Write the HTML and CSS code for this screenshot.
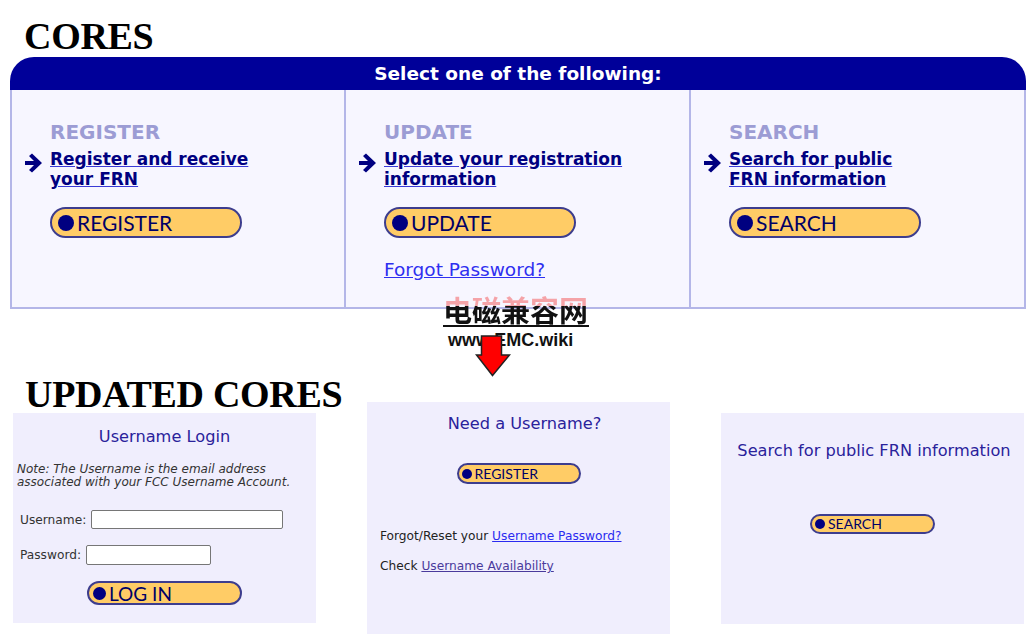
FILE: index.html
```html
<!DOCTYPE html>
<html lang="en">
<head>
  <meta charset="UTF-8">
  <title>CORES - Updated CORES</title>
  <link rel="stylesheet" href="styles.css">
</head>
<body>

  <h1 class="page-title">CORES</h1>

  <div class="panel">
    <div class="panel-header">Select one of the following:</div>
    <div class="panel-body">
      <div class="column">
        <h3>REGISTER</h3>
        <div class="link-row">
          <svg class="arrow" width="17" height="20" viewBox="0 0 17 20"><polygon points="0,8 9,8 4,3 7,0.5 17,10 7,19.5 4,17 9,12 0,12"/></svg>
          <a href="#">Register and receive<br>your FRN</a>
        </div>
        <a class="pill pill-big" href="#"><span class="dot"></span>REGISTER</a>
      </div>
      <div class="column">
        <h3>UPDATE</h3>
        <div class="link-row">
          <svg class="arrow" width="17" height="20" viewBox="0 0 17 20"><polygon points="0,8 9,8 4,3 7,0.5 17,10 7,19.5 4,17 9,12 0,12"/></svg>
          <a href="#">Update your registration<br>information</a>
        </div>
        <a class="pill pill-big" href="#"><span class="dot"></span>UPDATE</a>
        <a class="forgot" href="#">Forgot Password?</a>
      </div>
      <div class="column">
        <h3>SEARCH</h3>
        <div class="link-row">
          <svg class="arrow" width="17" height="20" viewBox="0 0 17 20"><polygon points="0,8 9,8 4,3 7,0.5 17,10 7,19.5 4,17 9,12 0,12"/></svg>
          <a href="#">Search for public<br>FRN information</a>
        </div>
        <a class="pill pill-big" href="#"><span class="dot"></span>SEARCH</a>
      </div>
    </div>
  </div>

  <div class="bottom">
    <div class="bottom-left">
      <h1 class="page-title page-title-small">UPDATED CORES</h1>
      <div class="box box-login">
        <div class="box-title">Username Login</div>
        <p class="note">Note: The Username is the email address<br>associated with your FCC Username Account.</p>
        <div class="form-row">
          <label for="username">Username:</label>
          <input type="text" id="username" class="input-user">
        </div>
        <div class="form-row form-row-second">
          <label for="password">Password:</label>
          <input type="password" id="password" class="input-pass">
        </div>
        <a class="pill pill-login" href="#"><span class="dot"></span>LOG IN</a>
      </div>
    </div>

    <div class="box box-need">
      <div class="box-title box-title-need">Need a Username?</div>
      <a class="pill pill-small" href="#"><span class="dot"></span>REGISTER</a>
      <p class="line line-first">Forgot/Reset your <a class="blue" href="#">Username Password?</a></p>
      <p class="line">Check <a class="visited" href="#">Username Availability</a></p>
    </div>

    <div class="box box-search">
      <div class="box-title box-title-search">Search for public FRN information</div>
      <a class="pill pill-small pill-search" href="#"><span class="dot"></span>SEARCH</a>
    </div>
  </div>

  <!-- marca d'agua por cima do meio -->
  <div class="watermark">
    <div class="wm-cn">电磁兼容网</div>
    <div class="wm-line"></div>
    <div class="wm-url">www.EMC.wiki</div>
  </div>

  <svg class="red-arrow" width="36" height="42" viewBox="0 0 36 42">
    <path d="M6.5 1 H26.5 V20 H34.5 L17.5 40.5 L1.5 20 H6.5 Z" fill="#ff0000" stroke="#222" stroke-width="1.5"/>
  </svg>

</body>
</html>
```

FILE: styles.css
```css
:root {
  --navy: #000080;
  --header-blue: #000099;
  --lavender-line: #b4b6e8;
  --panel-bg: #f7f6ff;
  --box-bg: #f0eefd;
  --pill-yellow: #ffcc66;
  --pill-border: #3d3d8e;
}

body {
  margin: 0;
  font-family: "DejaVu Sans", Verdana, sans-serif;
  background-color: #ffffff;
  color: #333333;
  position: relative;
}

.page-title {
  font-family: "Liberation Serif", "Times New Roman", serif;
  font-weight: bold;
  font-size: 38px;
  line-height: 38px;
  letter-spacing: -0.3px;
  color: #000000;
  margin: 17px 0 2px 0;
  padding-left: 24px;
  white-space: nowrap;
}

.page-title-small {
  margin: 0;
  padding-left: 12px;
}

/* painel de cima */
.panel {
  margin-left: 10px;
  width: 1016px;
}

.panel-header {
  height: 33px;
  line-height: 33px;
  background-color: var(--header-blue);
  color: #ffffff;
  font-weight: bold;
  font-size: 18.5px;
  text-align: center;
  border-radius: 24px 24px 0 0;
}

.panel-body {
  display: grid;
  grid-template-columns: 332px 345px 335px;
  height: 217px;
  background-color: var(--panel-bg);
  border: 2px solid var(--lavender-line);
  border-top: none;
}

.column {
  padding: 30px 0 0 38px;
}

.column + .column {
  border-left: 2px solid var(--lavender-line);
}

.column h3 {
  margin: 0;
  font-size: 20px;
  line-height: 24px;
  color: #9c9cd4;
}

.link-row {
  display: flex;
  align-items: flex-start;
  margin: 5px 0 0 -25px;
}

.arrow {
  flex: none;
  margin: 4px 8px 0 0;
  fill: var(--navy);
}

.link-row a {
  font-size: 17px;
  line-height: 20px;
  font-weight: bold;
  color: var(--navy);
  text-decoration: underline;
  text-decoration-color: #3a3ad6;
}

.pill {
  display: flex;
  align-items: center;
  box-sizing: border-box;
  background-color: var(--pill-yellow);
  border: 2px solid var(--pill-border);
  font-family: Lato, "DejaVu Sans", sans-serif;
  color: #000066;
  text-decoration: none;
  line-height: 1;
}

.dot {
  flex: none;
  border-radius: 50%;
  background-color: var(--navy);
}

.pill-big {
  width: 192px;
  height: 31px;
  border-radius: 16px;
  margin-top: 18px;
  padding-left: 6px;
  font-size: 21px;
}

.pill-big .dot {
  width: 16px;
  height: 16px;
  margin-right: 3px;
}

.forgot {
  display: inline-block;
  margin-top: 21px;
  font-size: 18.5px;
  line-height: 22px;
  color: #2f2ff0;
}

/* parte de baixo */
.bottom {
  display: flex;
  align-items: flex-start;
  gap: 51px;
  margin-top: 66px;
  padding-left: 13px;
}

.bottom-left {
  width: 303px;
  flex: none;
}

.box {
  width: 303px;
  flex: none;
  box-sizing: border-box;
  background-color: var(--box-bg);
}

.box-login {
  height: 210px;
  padding-top: 14px;
}

.box-need {
  height: 232px;
  margin-top: 27px;
  padding-top: 12px;
}

.box-search {
  height: 211px;
  margin-top: 38px;
  padding-top: 28px;
}

.box-title {
  font-size: 16.2px;
  line-height: 20px;
  color: #2a229b;
  text-align: center;
}

.box-title-need {
  padding-left: 12px;
}

.box-title-search {
  padding-left: 3px;
}

.note {
  margin: 16px 0 0 4px;
  font-size: 12px;
  line-height: 13px;
  font-style: italic;
  color: #333333;
}

.form-row {
  display: flex;
  align-items: center;
  gap: 5px;
  margin: 21px 0 0 7px;
  font-size: 12.2px;
  color: #333333;
}

.form-row-second {
  margin-top: 16px;
}

.form-row input {
  box-sizing: border-box;
  margin: 0;
  padding: 0 3px;
  border: 1px solid #767676;
  border-radius: 2px;
  background-color: #ffffff;
}

.input-user {
  width: 192px;
  height: 19px;
}

.input-pass {
  width: 125px;
  height: 20px;
}

.pill-login {
  width: 155px;
  height: 24px;
  border-radius: 12px;
  margin: 16px 0 0 74px;
  padding-left: 4px;
  font-size: 19px;
}

.pill-login .dot {
  width: 13px;
  height: 13px;
  margin-right: 3px;
}

.pill-small {
  width: 124px;
  height: 21px;
  border-radius: 11px;
  margin: 29px auto 0 auto;
  padding-left: 3px;
  font-size: 14px;
}

.pill-small .dot {
  width: 10px;
  height: 10px;
  margin-right: 3px;
}

.pill-search {
  width: 125px;
  height: 20px;
  margin-top: 53px;
}

.line {
  margin: 15px 0 0 13px;
  font-size: 12.2px;
  line-height: 15px;
  color: #222222;
}

.line-first {
  margin-top: 45px;
}

.blue {
  color: #2a2af0;
}

.visited {
  color: #4a3a9c;
}

/* marca d'agua e seta vermelha */
.watermark {
  position: absolute;
  left: 443px;
  top: 293px;
  width: 146px;
}

.wm-cn {
  font-family: "Noto Sans CJK SC", sans-serif;
  font-weight: bold;
  font-size: 29px;
  line-height: 32px;
  white-space: nowrap;
  background: linear-gradient(#f5a3a8 0%, #f5a3a8 40%, #111111 40%, #111111 100%);
  -webkit-background-clip: text;
  background-clip: text;
  color: transparent;
}

.wm-line {
  height: 2px;
  background-color: #111111;
}

.wm-url {
  font-family: "Liberation Sans", Arial, sans-serif;
  font-weight: bold;
  font-size: 18px;
  line-height: 20px;
  color: #111111;
  padding: 3px 0 0 5px;
}

.red-arrow {
  position: absolute;
  left: 475px;
  top: 335px;
}
```
